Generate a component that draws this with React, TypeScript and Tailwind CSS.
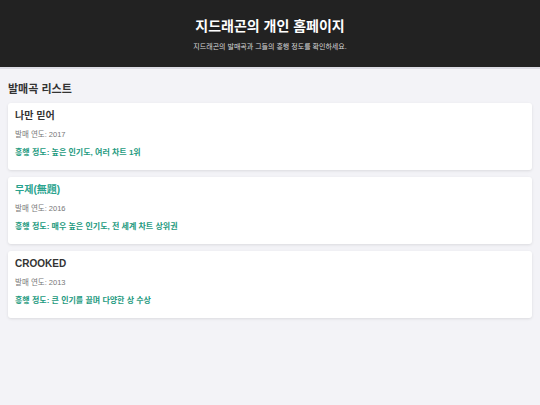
const songs = [
  { title: '나만 믿어', year: 2017, hit: '흥행 정도: 높은 인기도, 여러 차트 1위', active: false },
  { title: '무제(無題)', year: 2016, hit: '흥행 정도: 매우 높은 인기도, 전 세계 차트 상위권', active: true },
  { title: 'CROOKED', year: 2013, hit: '흥행 정도: 큰 인기를 끌며 다양한 상 수상', active: false },
];

export default function App() {
  return (
    <div className="min-h-[405px] bg-[#f3f3f7] font-['Liberation_Sans','Noto_Sans_CJK_KR',sans-serif]">
      <header className="bg-[#222222] border-b-2 border-[#dcdce4] pt-[16px] pb-[15px] text-center">
        <h1 className="text-white text-[14px] font-bold leading-[20px]">지드래곤의 개인 홈페이지</h1>
        <p className="text-[#d8d8d8] text-[7px] leading-[10px] mt-[6px]">지드래곤의 발매곡과 그들의 흥행 정도를 확인하세요.</p>
      </header>

      <main className="px-[8px] pt-[13px]">
        <h2 className="text-[#333] text-[11px] font-bold leading-[14px] mb-[7px]">발매곡 리스트</h2>
        <div className="flex flex-col gap-[7px]">
          {songs.map((s) => (
            <div key={s.title} className="bg-white rounded-[3px] shadow-[0_1px_3px_rgba(0,0,0,0.1)] px-[7px] pt-[6px] pb-[12px]">
              <h3 className={`text-[10px] font-bold leading-[14px] ${s.active ? 'text-[#2aa38e]' : 'text-[#333]'}`}>{s.title}</h3>
              <p className="text-[#777] text-[7.5px] leading-[10px] mt-[7px]">발매 연도: {s.year}</p>
              <p className="text-[#1e9a80] text-[8px] font-bold leading-[10px] mt-[8px]">{s.hit}</p>
            </div>
          ))}
        </div>
      </main>
    </div>
  );
}
